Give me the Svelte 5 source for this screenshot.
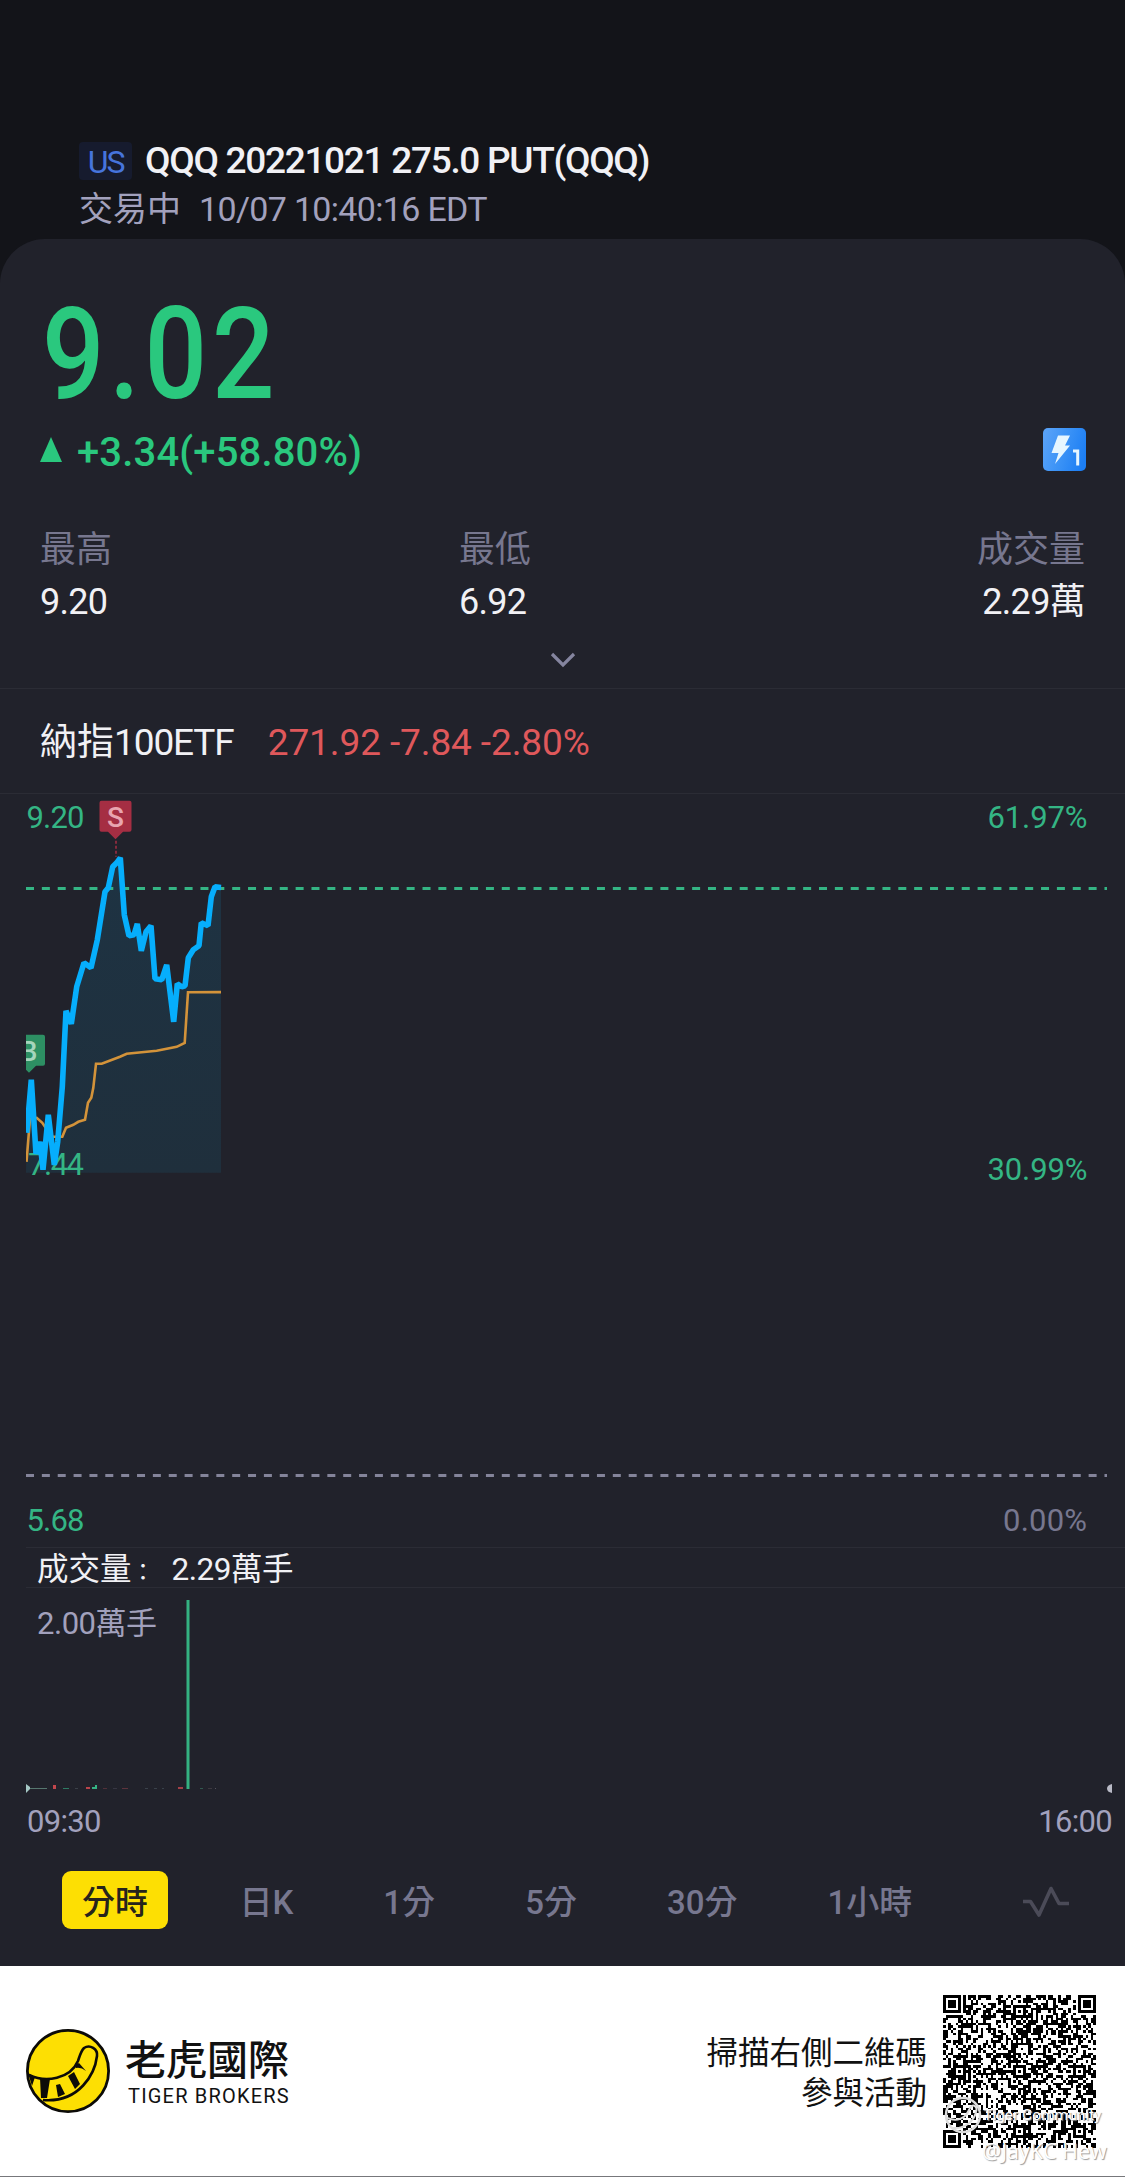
<script>
  const stats = [
    { label: '最高', value: '9.20' },
    { label: '最低', value: '6.92' },
    { label: '成交量', value: '2.29萬' },
  ]

  const periods = ['分時', '日K', '1分', '5分', '30分', '1小時']
  let period = $state('分時')

  // [x, y] inside the 1125x753 price chart
  const price = [
    [26.7, 340], [31.3, 287], [36, 361], [40, 349], [43, 377], [48.3, 322],
    [54.3, 372], [57.7, 349], [62.3, 294], [66, 218], [71.3, 231], [76.7, 194],
    [84, 170], [91, 175], [97.3, 147], [105, 99], [108.3, 95], [112.7, 74],
    [116.7, 70], [120.3, 65], [124.3, 122], [129, 143], [134, 142], [137.3, 131],
    [141.3, 158], [146, 139], [151, 133], [155, 186], [161.7, 187], [166.7, 172],
    [173.7, 229], [177.3, 191], [181.7, 194], [185, 193], [188.3, 165], [193.3, 157],
    [199, 153], [201.3, 130], [208, 133], [211.3, 104], [215, 94], [221, 94.7],
  ]

  // the average line is hidden behind the price at the open
  const average = [
    [[26.5, 369], [30, 326], [36.7, 325], [42.3, 330], [45, 334], [51.7, 344]],
    [
      [51.7, 344], [62.3, 344], [66, 335], [73.3, 332], [78.3, 329], [85, 327],
      [88, 310], [91.3, 305], [93.3, 295], [96, 271], [101.7, 271], [120, 264],
      [126.7, 261], [156.7, 258], [176.7, 254], [184.7, 250], [188, 199.5], [221, 199.3],
    ],
  ].flat()

  const points = (list) => list.map((p) => p.join(',')).join(' ')
  const area = `26,380 ${points(price)} 221,380`

  // small trades along the bottom of the volume pane
  const ticks = [
    { x: 30, w: 17, h: 1, c: '#56776f' },
    { x: 53, w: 3, h: 4, c: '#c2474d' },
    { x: 63, w: 6, h: 1, c: '#2d7b63' },
    { x: 75, w: 3, h: 1, c: '#3a4048' },
    { x: 86, w: 4, h: 2, c: '#b8444b' },
    { x: 92, w: 3, h: 2, c: '#35b384' },
    { x: 95, w: 2, h: 4, c: '#35b384' },
    { x: 103, w: 4, h: 1, c: '#513039' },
    { x: 113, w: 4, h: 1, c: '#363642' },
    { x: 122, w: 6, h: 1, c: '#5d333c' },
    { x: 145, w: 3, h: 1, c: '#39414a' },
    { x: 154, w: 3, h: 1, c: '#39414a' },
    { x: 162, w: 2, h: 1, c: '#39414a' },
    { x: 178, w: 5, h: 2, c: '#a33f47' },
    { x: 200, w: 3, h: 1, c: '#31584f' },
    { x: 208, w: 4, h: 1, c: '#3d3840' },
    { x: 215, w: 1, h: 1, c: '#54545f' },
  ]

  const SIZE = 61

  function ring(x, y, cx, cy, r) {
    const d = Math.max(Math.abs(x - cx), Math.abs(y - cy))
    return d > r ? null : d
  }

  function buildCode() {
    let seed = 20221021
    let d = ''
    for (let y = 0; y < SIZE; y++) {
      for (let x = 0; x < SIZE; x++) {
        seed = (seed * 1103515245 + 12345) % 2147483648
        let on = (seed >> 12) % 100 < 51
        for (const [cx, cy] of [[6, 30], [30, 6], [30, 30], [30, 54], [54, 30], [54, 54]]) {
          const a = ring(x, y, cx, cy, 2)
          if (a !== null) on = a !== 1
        }
        for (const [cx, cy] of [[3, 3], [57, 3], [3, 57]]) {
          const f = ring(x, y, cx, cy, 4)
          if (f !== null) on = f !== 2 && f !== 4
        }
        if (on) d += `M${x} ${y}h1v1h-1z`
      }
    }
    return d
  }

  const code = buildCode()
</script>

<main>
  <header>
    <div class="title-row">
      <span class="market">US</span>
      <h1>QQQ 20221021 275.0 PUT(QQQ)</h1>
    </div>
    <p class="status"><span>交易中</span><span class="date">10/07 10:40:16 EDT</span></p>
  </header>

  <section class="card">
    <div class="price">9.02</div>

    <div class="change-row">
      <svg class="arrow" viewBox="0 0 22 25"><path d="M11 0L22 25H0z" fill="#2ac87e" /></svg>
      <span class="change">+3.34(+58.80%)</span>
      <svg class="level" viewBox="0 0 43 43">
        <defs>
          <linearGradient id="levelBg" x1="0" y1="0.3" x2="1" y2="0.6">
            <stop offset="0" stop-color="#58a2f8" />
            <stop offset="0.5" stop-color="#3a92f6" />
            <stop offset="1" stop-color="#1c7ef4" />
          </linearGradient>
        </defs>
        <rect width="43" height="43" rx="5" fill="url(#levelBg)" />
        <path d="M15 7.5H27L22 17.5H27L12 36L15.5 25H8.500z" fill="#e6f6ff" />
        <path d="M30 23H34.700V37.500" fill="none" stroke="#e6f6ff" stroke-width="3" />
      </svg>
    </div>

    <div class="stats">
      {#each stats as s}
        <div class="stat">
          <span class="label">{s.label}</span>
          <span class="value">{s.value}</span>
        </div>
      {/each}
    </div>

    <svg class="chevron" viewBox="0 0 28 20">
      <path d="M3 4L14 15L25 4" fill="none" stroke="#85859f" stroke-width="3.2" />
    </svg>

    <div class="underlying">
      <span class="name">納指<span class="latin">100ETF</span></span>
      <span class="quote">271.92 -7.84 -2.80%</span>
    </div>

    <svg class="chart" viewBox="0 1.2 1125 753">
      <defs>
        <clipPath id="plot"><rect x="26" y="0" width="1099" height="753" /></clipPath>
        <linearGradient id="fill" x1="0" y1="0" x2="0" y2="1">
          <stop offset="0" stop-color="#1e3343" />
          <stop offset="1" stop-color="#1f2f3c" />
        </linearGradient>
      </defs>
      <polygon points={area} fill="url(#fill)" />
      <line x1="26" y1="95.7" x2="1107" y2="95.7" stroke="#34b584" stroke-width="3" stroke-dasharray="8 7.86" />
      <line x1="26" y1="682.7" x2="1107" y2="682.7" stroke="#84849a" stroke-width="3" stroke-dasharray="8 7.86" />

      <g class="axis">
        <text x="26.5" y="35" textLength="58">9.20</text>
        <text x="28" y="382" textLength="56">7.44</text>
        <text x="26.5" y="738" textLength="58">5.68</text>
        <text x="987.5" y="35" textLength="100">61.97%</text>
        <text x="987.5" y="387" textLength="100">30.99%</text>
        <text class="muted" x="1003" y="738" textLength="84">0.00%</text>
      </g>

      <g clip-path="url(#plot)">
        <path d="M13.5 244q0-2 2-2H43q2 0 2 2V271q0 2-2 2H36L29 280L22 273H15.5q-2 0-2-2z" fill="#2d8f63" />
        <text class="mark" x="28.5" y="268" fill="#a5d5bc">B</text>
        <polyline points={points(average)} fill="none" stroke="#d3933a" stroke-width="2.6" />
        <polyline points={points(price)} fill="none" stroke="#06aefc" stroke-width="5.6" stroke-linejoin="bevel" />
      </g>

      <path d="M99.5 10q0-2 2-2H129.5q2 0 2 2V37q0 2-2 2H123L115.5 46.5L108 39H101.5q-2 0-2-2z" fill="#a52e43" />
      <text class="mark" x="115.5" y="34" fill="#e8a5b0">S</text>
      <line x1="116" y1="48" x2="116" y2="64" stroke="#a52e43" stroke-width="1.5" stroke-dasharray="3 2" />
    </svg>

    <div class="volume-head">
      <span>成交量</span><span class="colon">：</span><span class="amount">2.29萬手</span>
    </div>

    <svg class="volume" viewBox="0 0 1125 212">
      <text x="37" y="46" class="scale" textLength="120">2.00萬手</text>
      {#each ticks as t}
        <rect x={t.x} y={201 - t.h} width={t.w} height={t.h} fill={t.c} />
      {/each}
      <rect x="186.5" y="12" width="3" height="189" fill="#34b181" />
      <path d="M26 196L30 199V201L26 205z" fill="#a5c8c5" />
      <path d="M1112 196Q1107 197 1107 200.500T1112 205z" fill="#b9bac6" />
    </svg>

    <div class="times">
      <span>09:30</span>
      <span>16:00</span>
    </div>

    <nav>
      {#each periods as p}
        <button class:active={period === p} onclick={() => (period = p)}>{p}</button>
      {/each}
      <svg class="wave" viewBox="0 0 48 32">
        <path d="M1 15.500H8.500L17 29L29 2.500L37 17.500H47" fill="none" stroke="#4b4b58" stroke-width="3.600" stroke-linejoin="round" />
      </svg>
    </nav>
  </section>

  <footer>
    <svg class="logo" viewBox="0 0 84 84">
      <circle cx="42" cy="42" r="40.6" fill="#fddf03" stroke="#0c0b08" stroke-width="2.8" />
      <path d="M3 46C20 54 44 50 52 32C54 26 55 22 58 19C64 15 72 20 71 27C69 44 54 74 17 71" fill="none" stroke="#0c0b08" stroke-width="2.6" />
      <path d="M2 44L9 48L6 57zM14 49L24 50L21 69L15 69zM30 56L34 55L39 65L32 68zM42 47L48 43L54 55L49 60zM49 36L53 34L60 42Q55 38 50 39z" fill="#0c0b08" />
    </svg>
    <div class="brand">
      <strong>老虎國際</strong>
      <span>TIGER BROKERS</span>
    </div>
    <p class="invite">掃描右側二維碼<br />參與活動</p>
    <div class="code">
      <svg viewBox="0 0 61 61" shape-rendering="crispEdges"><path d={code} fill="#000" /></svg>
      <div class="watermark">
        <svg viewBox="0 0 40 40">
          <circle cx="20" cy="20" r="17" fill="none" stroke="#ddd" stroke-width="2.5" />
          <path d="M4 23C14 27 22 24 26 15C29 7 35 11 33 17C31 26 22 34 10 33" fill="none" stroke="#ddd" stroke-width="2" />
        </svg>
        <span class="community">Tiger Community</span>
        <span class="user">@JayKC Hew</span>
      </div>
    </div>
  </footer>
</main>

<style>
  :global(body) {
    margin: 0;
    background: #131419;
  }

  main {
    width: 1125px;
    height: 2177px;
    overflow: hidden;
    color: #f1f1f5;
    font-family: Roboto, 'Noto Sans CJK TC', sans-serif;
  }

  h1,
  p {
    margin: 0;
  }

  header {
    box-sizing: border-box;
    height: 239px;
    padding: 141px 0 0 79px;
  }

  .title-row {
    display: flex;
    align-items: center;
    height: 39px;
  }

  .market {
    width: 53px;
    height: 38px;
    border-radius: 4px;
    background: #161b2e;
    color: #4674dc;
    font-size: 32px;
    line-height: 40px;
    letter-spacing: -2px;
    text-align: center;
  }

  h1 {
    margin-left: 13px;
    font-size: 37px;
    font-weight: 500;
    letter-spacing: -1.3px;
    line-height: 38px;
    white-space: nowrap;
  }

  .status {
    margin-top: 10px;
    color: #a2a1bd;
    font-size: 34px;
    line-height: 38px;
  }

  .date {
    margin-left: 18px;
    letter-spacing: -0.67px;
  }

  .card {
    box-sizing: border-box;
    height: 1727px;
    padding-top: 60px;
    border-radius: 45px 45px 0 0;
    background: #21222b;
  }

  .price {
    padding-left: 42px;
    color: #2ac87e;
    font-size: 128px;
    font-weight: 500;
    line-height: 110px;
    letter-spacing: 5.5px;
    /* narrow digits */
    transform: scaleX(0.86);
    transform-origin: 42px 0;
  }

  .change-row {
    display: flex;
    align-items: center;
    height: 43px;
    margin-top: 19px;
    padding: 0 39px 0 40px;
  }

  .arrow {
    width: 22px;
    height: 25px;
  }

  .change {
    flex: 1;
    padding-top: 5px;
    margin-left: 15px;
    color: #2ac87e;
    font-size: 40px;
    font-weight: 500;
    letter-spacing: 0.15px;
  }

  .level {
    width: 43px;
    height: 43px;
  }

  .stats {
    display: grid;
    grid-template-columns: 419px 1fr auto;
    margin-top: 59px;
    padding: 0 40px;
  }

  .stat {
    display: flex;
    flex-direction: column;
    gap: 12px;
    line-height: 40px;
  }

  .stat:last-child {
    text-align: right;
  }

  .label {
    color: #77778f;
    font-size: 36px;
  }

  .value {
    font-size: 36px;
    letter-spacing: -0.7px;
  }

  .chevron {
    display: block;
    width: 28px;
    height: 20px;
    margin: 28px auto 18px;
  }

  .underlying {
    box-sizing: border-box;
    display: flex;
    align-items: center;
    gap: 34px;
    height: 106px;
    padding: 4px 0 0 40px;
    border-top: 1px solid #2b2c35;
    border-bottom: 1px solid #2b2c35;
    font-size: 37px;
    line-height: 40px;
  }

  .latin {
    letter-spacing: -1.1px;
  }

  .quote {
    color: #df585b;
    letter-spacing: -0.1px;
  }

  .chart {
    display: block;
    width: 1125px;
    height: 753px;
  }

  .axis {
    fill: #34b584;
    font-size: 31px;
  }

  .axis .muted {
    fill: #77778f;
  }

  .mark {
    font-size: 28px;
    font-weight: 500;
    text-anchor: middle;
  }

  .volume-head {
    box-sizing: border-box;
    display: flex;
    height: 41px;
    margin-left: 26px;
    padding-left: 11px;
    border-top: 1px solid #2b2c35;
    border-bottom: 1px solid #2b2c35;
    font-size: 31.5px;
    line-height: 43px;
  }

  .colon {
    width: 30px;
    padding-top: 3px;
    font-size: 23px;
  }

  .amount {
    margin-left: 10px;
    letter-spacing: -0.5px;
  }

  .volume {
    display: block;
    width: 1125px;
    height: 212px;
  }

  .scale {
    fill: #a2a1bd;
    font-size: 31px;
  }

  .times {
    display: flex;
    justify-content: space-between;
    padding: 4px 13px 0 27px;
    color: #a2a1bd;
    font-size: 31px;
    line-height: 36px;
    letter-spacing: -0.7px;
  }

  nav {
    display: flex;
    align-items: center;
    height: 58px;
    margin-top: 31px;
    padding: 0 55px 0 62px;
  }

  nav button {
    height: 58px;
    padding: 0 20px;
    border: none;
    border-radius: 9px;
    background: transparent;
    color: #77778f;
    font-family: inherit;
    font-size: 33px;
    font-weight: 500;
    line-height: 64px;
    white-space: nowrap;
  }

  nav button.active {
    background: #fddf03;
    color: #26241c;
  }

  nav button + button {
    margin-left: 50px;
  }

  nav button.active + button {
    margin-left: 51.5px;
  }

  .wave {
    width: 48px;
    height: 32px;
    margin: 4px 0 0 auto;
  }

  footer {
    box-sizing: border-box;
    display: flex;
    align-items: center;
    height: 211px;
    padding: 0 29px 0 26px;
    border-bottom: 1px solid #77777b;
    background: #fff;
    color: #111;
  }

  .logo {
    width: 84px;
    height: 84px;
  }

  .brand {
    display: flex;
    flex-direction: column;
    padding-top: 5px;
    margin-left: 15px;
  }

  .brand strong {
    font-size: 41px;
    font-weight: 500;
    line-height: 44px;
  }

  .brand span {
    padding-left: 3px;
    font-size: 20px;
    line-height: 26px;
    letter-spacing: 1.2px;
  }

  .invite {
    padding-top: 5px;
    margin-left: auto;
    font-size: 31.5px;
    line-height: 40px;
    text-align: right;
  }

  .code {
    position: relative;
    width: 153px;
    height: 153px;
    margin-left: 16px;
  }

  .code > svg {
    display: block;
    width: 153px;
    height: 153px;
  }

  .watermark {
    position: absolute;
    top: 100px;
    left: 0;
    width: 160px;
    color: #fff;
    text-shadow: 1px 1px 1px #999;
    white-space: nowrap;
  }

  .watermark svg {
    position: absolute;
    width: 40px;
    height: 40px;
  }

  .community {
    position: absolute;
    top: 11px;
    left: 40px;
    font-size: 15.5px;
  }

  .user {
    position: absolute;
    top: 41px;
    left: 39px;
    font-family: 'Open Sans', sans-serif;
    font-size: 21.5px;
  }
</style>
